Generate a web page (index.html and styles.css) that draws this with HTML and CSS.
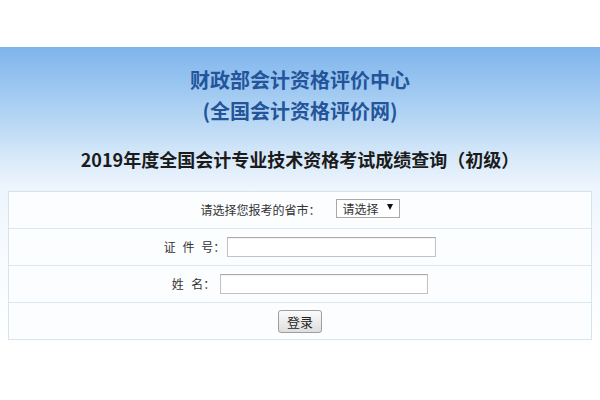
FILE: index.html
```html
<!DOCTYPE html>
<html lang="zh-CN">
<head>
<meta charset="utf-8">
<title>2019年度全国会计专业技术资格考试成绩查询（初级）</title>
<link rel="stylesheet" href="styles.css">
</head>
<body>
<div class="topbar"></div>
<div class="panel">
  <div class="org">财政部会计资格评价中心<br>(全国会计资格评价网)</div>
  <h1 class="title">2019年度全国会计专业技术资格考试成绩查询（初级）</h1>
  <div class="form">
    <div class="row">
      <label class="lbl">请选择您报考的省市：</label>
      <span class="sel">
        <select class="select"><option>请选择</option></select>
        <svg class="arrow" width="6" height="6" viewBox="0 0 6 6"><path d="M0 0H6L3 6Z" fill="#111"/></svg>
      </span>
    </div>
    <div class="row">
      <label class="lbl spaced">证 件 号：</label>
      <input class="field" type="text">
    </div>
    <div class="row">
      <label class="lbl spaced wide">姓 名：</label>
      <input class="field short" type="text">
    </div>
    <div class="row">
      <button class="btn" type="button">登录</button>
    </div>
  </div>
</div>
</body>
</html>
```
FILE: styles.css
```css
html, body {
  margin: 0;
  padding: 0;
  background: #ffffff;
  font-family: "Noto Sans CJK SC", "Liberation Sans", sans-serif;
}

.topbar {
  height: 47px;
  background: #ffffff;
}

.panel {
  padding: 17px 8px 0;
  background: linear-gradient(to bottom,
    #7eb4ec 0px,
    #9cc7f1 40px,
    #bcdaf5 80px,
    #dbebfa 115px,
    #edf5fd 140px,
    #f6fafe 200px,
    #ffffff 293px);
}

.org {
  font-size: 20px;
  font-weight: bold;
  line-height: 31px;
  color: #24559a;
  text-align: center;
}

.title {
  margin: 18px 0 0;
  font-size: 18px;
  font-weight: bold;
  line-height: 30px;
  color: #1b1b1b;
  text-align: center;
}

.form {
  margin-top: 17px;
  border: 1px solid #d6e4f0;
  background: #fcfdff;
}

.row {
  height: 36px;
  display: flex;
  align-items: center;
  justify-content: center;
  gap: 2px;
  border-top: 1px solid #dae7f1;
}

.row:first-child {
  border-top: none;
}

.lbl {
  font-size: 12px;
  color: #333333;
  line-height: 16px;
}

.spaced {
  word-spacing: 4px;
}

.wide {
  word-spacing: 5px;
  margin-right: 3px;
}

.sel {
  position: relative;
  display: flex;
  align-items: center;
  height: 19px;
  margin-left: 13px;
  margin-top: -3px;
}

.select {
  display: block;
  -webkit-appearance: none;
  appearance: none;
  box-sizing: border-box;
  width: 64px;
  height: 19px;
  margin: 0;
  padding: 0 0 0 6px;
  border: 1px solid #a9a9a9;
  border-radius: 0;
  background: #ffffff;
  font-family: "Noto Sans CJK SC", sans-serif;
  font-size: 12px;
  line-height: 17px;
  color: #333333;
}

.arrow {
  position: absolute;
  right: 7px;
  top: 5px;
  pointer-events: none;
}

.field {
  box-sizing: border-box;
  width: 209px;
  height: 20px;
  margin: 0;
  padding: 0 3px;
  border: 1px solid #c2c2c2;
  border-top-color: #a9a9a9;
  border-radius: 0;
  background: #ffffff;
  box-shadow: inset 0 1px 1px rgba(0, 0, 0, 0.05);
}

.field.short {
  width: 208px;
}

.btn {
  box-sizing: border-box;
  width: 44px;
  height: 23px;
  margin: 0;
  padding: 0;
  border: 1px solid #9e9e9e;
  border-radius: 3px;
  background: linear-gradient(to bottom, #fbfbfb, #dedede);
  font-family: "Noto Sans CJK SC", sans-serif;
  font-size: 13px;
  line-height: 21px;
  color: #222222;
}
```
